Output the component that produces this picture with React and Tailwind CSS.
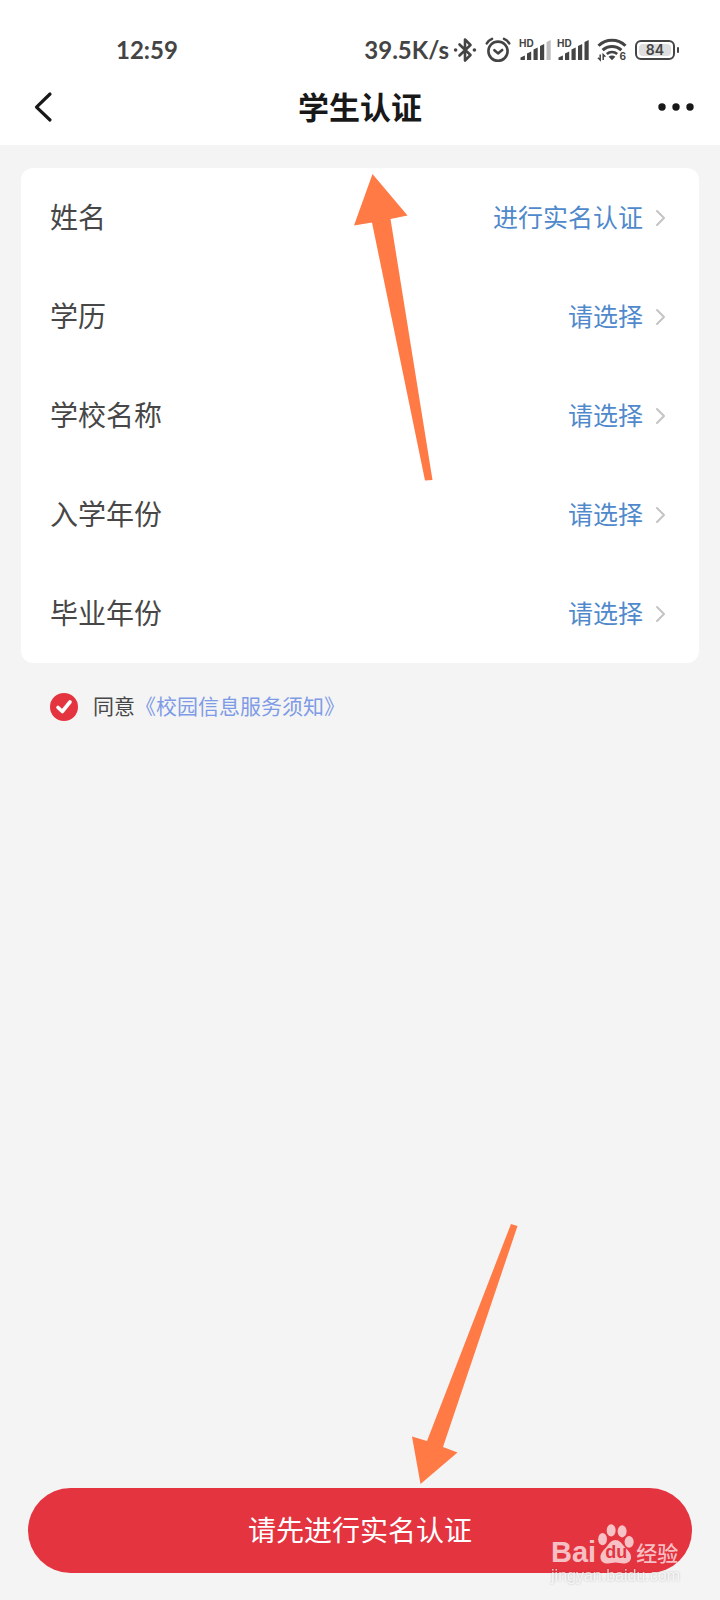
import { useState } from 'react'

const rows = [
  { key: 'name', label: '姓名', action: '进行实名认证' },
  { key: 'degree', label: '学历', action: '请选择' },
  { key: 'school', label: '学校名称', action: '请选择' },
  { key: 'enrolled', label: '入学年份', action: '请选择' },
  { key: 'graduated', label: '毕业年份', action: '请选择' },
]

function BluetoothIcon() {
  return (
    <svg width="24" height="26" viewBox="0 0 24 26" fill="none" stroke="currentColor" strokeWidth="2.6" strokeLinejoin="round" strokeLinecap="round" aria-hidden="true">
      <path d="M6.500 7.500 17.500 18 12 23.500v-21L17.500 8 6.500 18.500" />
      <circle cx="2.600" cy="13" r="1.800" fill="currentColor" stroke="none" />
      <circle cx="21.400" cy="13" r="1.800" fill="currentColor" stroke="none" />
    </svg>
  )
}

function AlarmIcon() {
  return (
    <svg width="26" height="26" viewBox="0 0 26 26" fill="none" stroke="currentColor" strokeWidth="2.6" strokeLinecap="round" strokeLinejoin="round" aria-hidden="true">
      <circle cx="13" cy="14.200" r="9.600" />
      <path d="M9.400 13.200 13 16.400l4.200-3.400" />
      <path d="M1.800 6.400C3 4.400 4.800 2.800 7 1.900M24.200 6.400C23 4.400 21.200 2.800 19 1.900" />
    </svg>
  )
}

function SignalIcon({ weak }) {
  return (
    <svg width="32" height="24" viewBox="0 0 32 24" fill="currentColor" aria-hidden="true">
      <text x="0" y="9" fontSize="10" fontWeight="700" fontFamily="Inter, sans-serif">HD</text>
      <path d="M1.500 22v-2.500l4.400-2V22zM8 22v-6.500l4.200-2V22z" />
      <path d="M14.500 22V11.500l4.200-2V22zM21 22V8l4.200-2v16z" />
      <path d="M27.500 22V4l4.200-2v20z" opacity={weak ? 0.35 : 1} />
    </svg>
  )
}

function WifiIcon() {
  return (
    <svg width="30" height="24" viewBox="0 0 30 24" fill="none" stroke="currentColor" aria-hidden="true">
      <path d="M1.500 7.800c7.500-7.400 19.500-7.400 27 0" strokeWidth="3" />
      <path d="M5.600 12.200c5.300-5 13.500-5 18.800 0" strokeWidth="3" />
      <path d="M9.800 16c3-2.700 7.400-2.700 10.400 0" strokeWidth="2.600" />
      <path d="M11.600 18.800c1.900-1.600 4.900-1.600 6.800 0L15 22.200z" fill="currentColor" stroke="none" />
      <path d="M3.200 16.500V22L1 19.800M6.200 22v-5.500l2.200 2.200" strokeWidth="1.500" />
      <text x="22.500" y="22" fontSize="10" fontWeight="700" fontFamily="Inter, sans-serif" fill="currentColor" stroke="none">6</text>
    </svg>
  )
}

function Battery({ level }) {
  return (
    <div className="flex items-center gap-0.5">
      <div className="flex h-5 w-10 rounded-md border-2 border-[#444] p-0.5">
        <div className="flex flex-1 items-center justify-center rounded-sm bg-[#dedede] font-[Inter] text-sm leading-none font-semibold">
          {level}
        </div>
      </div>
      <div className="h-1.5 w-0.5 rounded-full bg-[#444]" />
    </div>
  )
}

function StatusBar() {
  return (
    <div className="flex h-[72px] items-center justify-between pt-7 pr-[41px] pl-[116px] font-[Lato] text-2xl leading-none font-bold text-[#444]">
      <span>12:59</span>
      <div className="flex items-center gap-2">
        <div className="flex items-center gap-1">
          <span>39.5K/s</span>
          <BluetoothIcon />
        </div>
        <AlarmIcon />
        <div className="flex items-center gap-1.5">
          <SignalIcon weak />
          <SignalIcon />
        </div>
        <WifiIcon />
        <Battery level={84} />
      </div>
    </div>
  )
}

function TitleBar() {
  return (
    <div className="flex h-[73px] items-center justify-between px-5 pb-1 text-[#181818]">
      <button aria-label="返回" className="flex h-12 w-12 cursor-pointer items-center justify-center">
        <svg width="22" height="32" viewBox="0 0 22 32" fill="none" stroke="currentColor" strokeWidth="3.200" strokeLinecap="round" strokeLinejoin="round">
          <path d="M17 3 3.500 16.200 17 29" />
        </svg>
      </button>
      <h1 className="pb-0.5 text-[31px] leading-none font-bold">学生认证</h1>
      <button aria-label="更多" className="flex h-12 w-12 cursor-pointer items-center justify-center">
        <svg width="36" height="8" viewBox="0 0 36 8" fill="currentColor">
          <circle cx="4" cy="4" r="3.700" />
          <circle cx="18" cy="4" r="3.700" />
          <circle cx="32" cy="4" r="3.700" />
        </svg>
      </button>
    </div>
  )
}

function FormRow({ label, action }) {
  return (
    <button className="flex h-[99px] w-full cursor-pointer items-center justify-between pr-8 pl-[29px]">
      <span className="pb-1 text-[28px] text-[#474747]">{label}</span>
      <span className="flex items-center gap-3 text-[25px] text-[#5089cb]">
        <span className="pb-0.5">{action}</span>
        <svg width="12" height="18" viewBox="0 0 12 18" fill="none" stroke="#c4c4c4" strokeWidth="2" strokeLinecap="round" strokeLinejoin="round" aria-hidden="true">
          <path d="M2 2 9 9l-7 7" />
        </svg>
      </span>
    </button>
  )
}

function Watermark() {
  return (
    <div className="pointer-events-none absolute right-10 bottom-3 text-white/70">
      <div className="flex h-10 items-end gap-0.5">
        <span className="font-['Liberation_Sans'] text-[29px] leading-6 font-bold">Bai</span>
        <div className="relative h-10 w-9">
          <svg width="36" height="40" viewBox="0 0 37 41" fill="currentColor" aria-hidden="true">
            <ellipse cx="4.700" cy="15.500" rx="4.500" ry="6.200" />
            <ellipse cx="13.500" cy="6.500" rx="4.600" ry="6.300" />
            <ellipse cx="24.800" cy="7.500" rx="4.600" ry="6.200" />
            <ellipse cx="32" cy="18.300" rx="4.700" ry="6" />
            <path d="M18 16.500c4 0 6.500 3.500 8.500 6 3 3.500 7.500 6.500 7.500 11.500 0 4.500-4 6.500-8 6.500-3 0-5-1-8-1s-5 1-8 1c-4 0-7.500-2-7.500-6.500 0-5 4.500-8 7-11.500 2-2.500 4.500-6 8.500-6z" />
          </svg>
          <span className="absolute inset-x-0 bottom-0.5 text-center font-['Liberation_Sans'] text-lg leading-5 font-bold text-[#e4343f]">du</span>
        </div>
        <span className="text-[21px] leading-6 font-medium">经验</span>
      </div>
      <p className="font-['Liberation_Sans'] text-base leading-6 drop-shadow-[0_0_1px_rgba(0,0,0,0.3)]">jingyan.baidu.com</p>
    </div>
  )
}

export default function App() {
  const [agreed, setAgreed] = useState(true)

  return (
    <div className="flex min-h-screen flex-col bg-[#f4f4f4] font-['Noto_Sans_CJK_SC',sans-serif]">
      <header className="bg-white">
        <StatusBar />
        <TitleBar />
      </header>

      <main className="flex-1 px-[21px] pt-[23px]">
        <div className="relative rounded-xl bg-white">
          {rows.map((r) => (
            <FormRow key={r.key} label={r.label} action={r.action} />
          ))}
          <svg width="80" height="307" viewBox="0 0 80 307" fill="#ff7a45" className="pointer-events-none absolute top-1.5 left-1/2 -ml-1.5" aria-hidden="true">
            <path d="M18.500 0 53.500 41.500 36.500 45 78.500 306 71 306.500 18 48.500 0 51.500z" />
          </svg>
        </div>

        <div className="mt-[26px] flex items-center gap-[15px] pl-[29px] text-[21px] leading-8 text-[#474747]">
          <div className="relative h-7 w-7">
            <input
              id="agree"
              type="checkbox"
              checked={agreed}
              onChange={(e) => setAgreed(e.target.checked)}
              className="block h-7 w-7 cursor-pointer appearance-none rounded-full border-2 border-[#c4c4c4] checked:border-[#e4343f] checked:bg-[#e4343f]"
            />
            {agreed && (
              <svg width="28" height="28" viewBox="0 0 28 28" fill="none" stroke="white" strokeWidth="3.600" strokeLinecap="round" strokeLinejoin="round" className="pointer-events-none absolute inset-0" aria-hidden="true">
                <path d="M8 14.500 12.300 18.500 20 9" />
              </svg>
            )}
          </div>
          <p className="pb-1">
            <label htmlFor="agree">同意</label>
            <a href="#notice" className="text-[#7e9be6]">《校园信息服务须知》</a>
          </p>
        </div>
      </main>

      <footer className="relative px-7 pb-[27px]">
        <button className="h-[85px] w-full cursor-pointer rounded-full bg-[#e4343f] pb-1 text-[28px] text-white">
          请先进行实名认证
        </button>
        <svg width="106" height="261" viewBox="0 0 106 261" fill="#ff7a45" className="pointer-events-none absolute bottom-[115px] left-1/2 ml-[52px]" aria-hidden="true">
          <path d="M8.500 260 0 212.500 15 217 99 0 105.500 2 31 223 45.500 228.500z" />
        </svg>
        <Watermark />
      </footer>
    </div>
  )
}
